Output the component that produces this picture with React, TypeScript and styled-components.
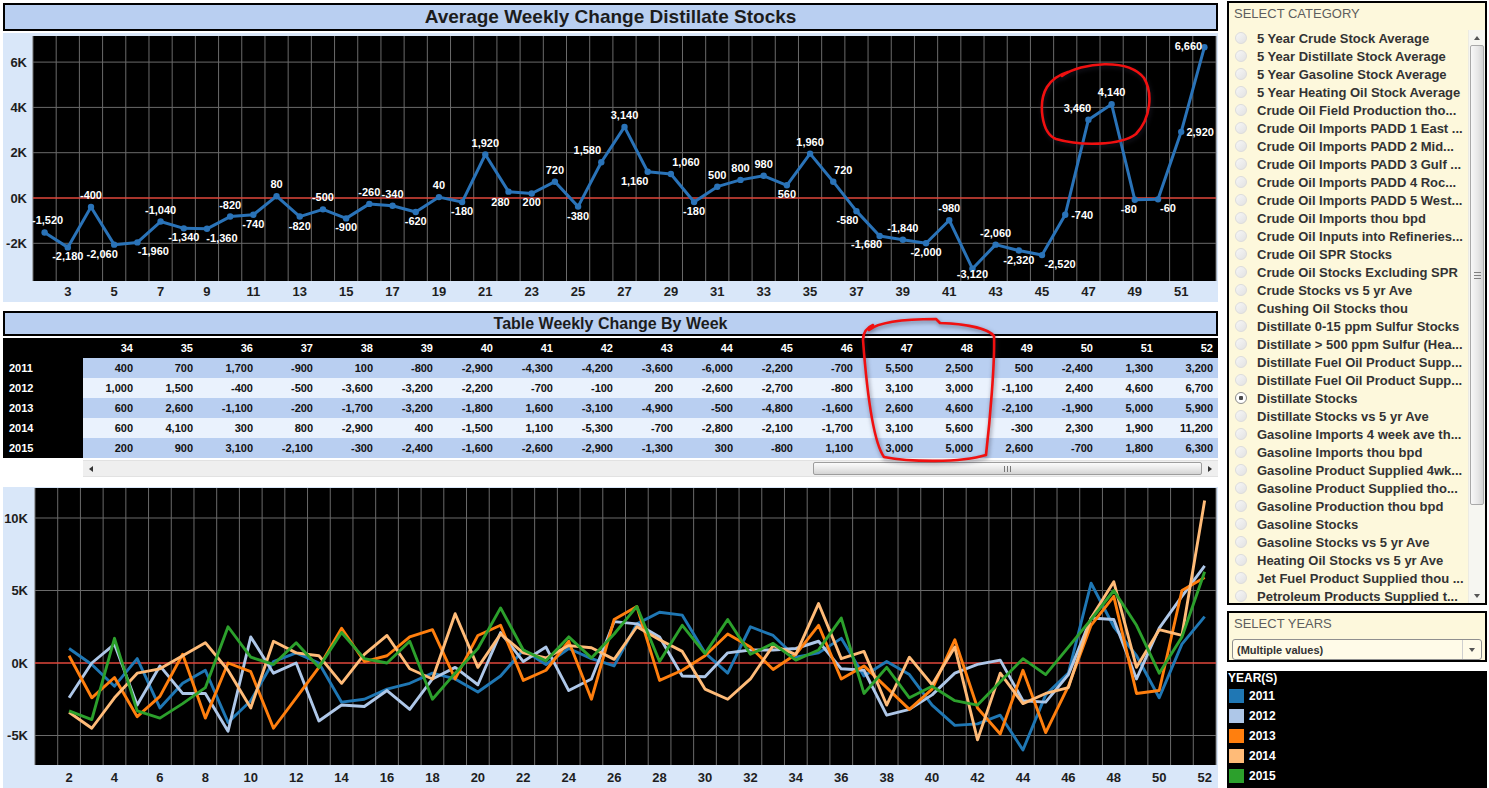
import React from 'react';
import styled, { createGlobalStyle } from 'styled-components';

const GlobalStyle = createGlobalStyle`
  html, body {
    margin: 0;
    padding: 0;
    background: #ffffff;
  }
  body {
    font-family: "Liberation Sans", Arial, sans-serif;
  }
`;

/* ---------- data ---------- */

// weekly change by year, weeks 2..52
const series: { year: string; color: string; values: number[] }[] = [
  {
    year: '2011',
    color: '#1f77b4',
    values: [1000, -100, -1600, 300, -3100, -1400, -500, -4100, -2600, 100, 700, 0, -2700, -2500, -1800, -1400, -700, -1100, -2000, -900, 900, -100, 1000, 300, -200, 2700, 3500, 3300, 700, -700, 2500, 1900,
      400, 700, 1700, -900, 100, -800, -2900, -4300, -4200, -3600, -6000, -2200, -700, 5500, 2500, 500, -2400, 1300, 3200],
  },
  {
    year: '2012',
    color: '#aec7e8',
    values: [-2400, 0, 1300, -2900, -200, -2100, -2100, -4700, 1800, -700, 0, -4000, -2900, -3000, -1900, -3200, -1100, -300, -1500, 2100, 100, 1100, -1900, -1100, 2850, 2700, 1800, -900, -950, 700, 900, 900,
      1000, 1500, -400, -500, -3600, -3200, -2200, -700, -100, 200, -2600, -2700, -800, 3100, 3000, -1100, 2400, 4600, 6700],
  },
  {
    year: '2013',
    color: '#ff7f0e',
    values: [500, -2400, -1000, -3700, -2300, 600, -3800, 0, -600, -4500, -2400, -300, 2400, 100, 500, 1800, 2300, -1100, 1900, 2600, -1200, -500, 1500, -2500, 3000, 3900, -1200, -500, 500, 2000, 1100, -450,
      600, 2600, -1100, -200, -1700, -3200, -1800, 1600, -3100, -4900, -500, -4800, -1600, 2600, 4600, -2100, -1900, 5000, 5900],
  },
  {
    year: '2014',
    color: '#ffbb78',
    values: [-3400, -4500, -2400, -700, -400, 500, 1400, -500, -3100, 1500, 700, 500, -1400, 600, 1900, -400, -1100, 3400, -300, 2000, 700, 350, 1200, 1050, 250, 2500, 1600, 800, -1800, -2500, -1100, 1200,
      600, 4100, 300, 800, -2900, 400, -1500, 1100, -5300, -700, -2800, -2100, -1700, 3100, 5600, -300, 2300, 1900, 11200],
  },
  {
    year: '2015',
    color: '#2ca02c',
    values: [-3300, -3900, 1700, -3300, -3800, -2800, -1700, 2500, 400, -100, 1400, -300, 2100, 300, 0, 1500, -2500, -700, 1000, 3800, 900, 150, 1800, 350, 2000, 3900, 100, 2600, 650, 3000, 600, 1350,
      200, 900, 3100, -2100, -300, -2400, -1600, -2600, -2900, -1300, 300, -800, 1100, 3000, 5000, 2600, -700, 1800, 6300],
  },
];

// five-year average, weeks 2..52, with label offsets [dx, dy]
const average = [-1520, -2180, -400, -2060, -1960, -1040, -1340, -1360, -820, -740, 80, -820, -500, -900, -260, -340, -620, 40, -180, 1920, 280, 200, 720, -380, 1580, 3140, 1160, 1060, -180, 500, 800, 980, 560, 1960, 720, -580, -1680, -1840, -2000, -980, -3120, -2060, -2320, -2520, -740, 3460, 4140, -80, -60, 2920, 6660];
const labelOffsets: [number, number][] = [
  [3, -12], [0, 9], [0, -12], [-12, 9], [16, 9], [0, -12], [0, 9], [15, 9], [0, -12], [0, 9],
  [0, -12], [0, 9], [0, -12], [0, 9], [0, -12], [0, -12], [0, 9], [0, -12], [0, 9], [0, -12],
  [-8, 10], [0, 9], [0, -12], [0, 9], [-14, -12], [0, -12], [-13, 9], [15, -12], [0, 9], [0, -12],
  [0, -12], [0, -12], [0, 9], [0, -12], [10, -12], [-9, 9], [-13, 8], [0, -12], [0, 9], [0, -12],
  [0, 5], [0, -12], [0, 9], [18, 9], [17, 0], [-11, -12], [0, -12], [-6, 9], [10, 9], [19, 0],
  [-16, -1],
];

const tableWeeks = Array.from({ length: 19 }, (_, i) => 34 + i);

const categories = [
  '5 Year Crude Stock Average',
  '5 Year Distillate Stock Average',
  '5 Year Gasoline Stock Average',
  '5 Year Heating Oil Stock Average',
  'Crude Oil Field Production tho...',
  'Crude Oil Imports PADD 1 East ...',
  'Crude Oil Imports PADD 2 Mid...',
  'Crude Oil Imports PADD 3 Gulf ...',
  'Crude Oil Imports PADD 4 Roc...',
  'Crude Oil Imports PADD 5 West...',
  'Crude Oil Imports thou bpd',
  'Crude Oil Inputs into Refineries...',
  'Crude Oil SPR Stocks',
  'Crude Oil Stocks Excluding SPR',
  'Crude Stocks vs 5 yr Ave',
  'Cushing Oil Stocks thou',
  'Distillate 0-15 ppm Sulfur Stocks',
  'Distillate > 500 ppm Sulfur (Hea...',
  'Distillate Fuel Oil Product Supp...',
  'Distillate Fuel Oil Product Supp...',
  'Distillate Stocks',
  'Distillate Stocks vs 5 yr Ave',
  'Gasoline Imports 4 week ave th...',
  'Gasoline Imports thou bpd',
  'Gasoline Product Supplied 4wk...',
  'Gasoline Product Supplied tho...',
  'Gasoline Production thou bpd',
  'Gasoline Stocks',
  'Gasoline Stocks vs 5 yr Ave',
  'Heating Oil Stocks vs 5 yr Ave',
  'Jet Fuel Product Supplied thou ...',
  'Petroleum Products Supplied t...',
];
const SELECTED = 'Distillate Stocks';

const fmt = (v: number) => v.toLocaleString('en-US');

/* ---------- layout ---------- */

const Page = styled.div`
  position: relative;
  display: flex;
  width: 1489px;
  height: 788px;
  overflow: hidden;
  background: #fff;
`;

const Main = styled.div`
  width: 1215px;
  margin-left: 3px;
  padding-top: 3px;
  display: flex;
  flex-direction: column;
`;

const TitleBar = styled.div<{ $h: number; $size: number; $mt?: number }>`
  box-sizing: border-box;
  height: ${({ $h }) => $h}px;
  margin-top: ${({ $mt = 0 }) => $mt}px;
  border: 2px solid #000;
  background: #b9cff1;
  display: flex;
  align-items: center;
  justify-content: center;
  font-weight: bold;
  font-size: ${({ $size }) => $size}px;
  color: #1c1c1c;
`;

const ChartPanel = styled.div<{ $h: number; $mt: number }>`
  height: ${({ $h }) => $h}px;
  margin-top: ${({ $mt }) => $mt}px;
  background: #d9e7f9;

  svg {
    display: block;
  }
`;

const AxisText = styled.text`
  font-family: "Liberation Sans", Arial, sans-serif;
  font-weight: bold;
  font-size: 13px;
  fill: #1e1e1e;
`;

const PointLabel = styled.text`
  font-family: "Liberation Sans", Arial, sans-serif;
  font-weight: bold;
  font-size: 11px;
  fill: #ffffff;
`;

/* ---------- table ---------- */

const TableFrame = styled.div`
  margin-top: 2px;
  width: 1215px;
  overflow: hidden;
`;

const Grid = styled.div`
  display: grid;
  grid-template-columns: 80px repeat(19, 60px);
  grid-auto-rows: 20px;
  width: 1220px;
  font-size: 11px;
  font-weight: bold;
`;

const HeadCell = styled.div`
  background: #000;
  color: #fff;
  display: flex;
  align-items: center;
  justify-content: flex-end;
  padding-right: 10px;
`;

const LabelCell = styled.div`
  background: #000;
  color: #fff;
  display: flex;
  align-items: center;
  padding-left: 6px;
`;

const DataCell = styled.div<{ $alt: boolean }>`
  background: ${({ $alt }) => ($alt ? '#eaf2fd' : '#b9cff1')};
  color: #111;
  display: flex;
  align-items: center;
  justify-content: flex-end;
  padding-right: 10px;
`;

const ScrollRow = styled.div`
  margin-top: 2px;
  height: 17px;
  display: flex;
`;

const ScrollSpacer = styled.div`
  width: 80px;
`;

const HTrack = styled.div`
  flex: 1;
  display: flex;
  align-items: stretch;
  background: #efefef;
  border-top: 1px solid #e2e2e2;
  border-bottom: 1px solid #e2e2e2;
`;

const ArrowBox = styled.div`
  width: 16px;
  display: flex;
  align-items: center;
  justify-content: center;
`;

const Tri = styled.span<{ $dir: 'left' | 'right' | 'up' | 'down' }>`
  width: 0;
  height: 0;
  border: 3px solid transparent;
  ${({ $dir }) =>
    $dir === 'left'
      ? 'border-right: 4px solid #333; border-left-width: 0;'
      : $dir === 'right'
      ? 'border-left: 4px solid #333; border-right-width: 0;'
      : $dir === 'up'
      ? 'border-bottom: 4px solid #555; border-top-width: 0;'
      : 'border-top: 4px solid #555; border-bottom-width: 0;'}
`;

const Fill = styled.div`
  flex: 1;
`;

const HThumb = styled.div`
  width: 387px;
  margin: 1px 0;
  border: 1px solid #9d9d9d;
  border-radius: 2px;
  background: linear-gradient(to bottom, #fbfbfb 0%, #e9e9e9 50%, #d4d4d4 100%);
  display: flex;
  align-items: center;
  justify-content: center;
`;

const HGrip = styled.span`
  width: 7px;
  height: 6px;
  background: repeating-linear-gradient(to right, #777 0 1px, transparent 1px 3px);
`;

/* ---------- sidebar ---------- */

const Sidebar = styled.div`
  width: 260px;
  margin-left: 9px;
  padding-top: 1px;
  display: flex;
  flex-direction: column;
`;

const CreamBox = styled.div<{ $h: number; $mt?: number }>`
  box-sizing: border-box;
  height: ${({ $h }) => $h}px;
  margin-top: ${({ $mt = 0 }) => $mt}px;
  border: 2px solid #000;
  background: #fdf8dc;
  display: flex;
  flex-direction: column;
`;

const BoxTitle = styled.div<{ $pb: number }>`
  padding: 3px 0 ${({ $pb }) => $pb}px 5px;
  line-height: 16px;
  font-size: 13px;
  color: #5e5e5e;
`;

const ListArea = styled.div`
  flex: 1;
  min-height: 0;
  display: flex;
`;

const ItemList = styled.div`
  flex: 1;
  overflow: hidden;
`;

const Item = styled.div`
  height: 18px;
  display: flex;
  align-items: center;
  gap: 10px;
  padding-left: 6px;
  white-space: nowrap;
  font-size: 13px;
  font-weight: bold;
  color: #333333;
`;

const Radio = styled.span<{ $on: boolean }>`
  flex: none;
  box-sizing: border-box;
  width: 12px;
  height: 12px;
  border-radius: 50%;
  border: 1px solid ${({ $on }) => ($on ? '#8a8a8a' : '#dcdcdc')};
  background: ${({ $on }) =>
    $on
      ? 'radial-gradient(circle, #4a4a4a 0 2px, #ffffff 2.5px)'
      : 'linear-gradient(135deg, #f7f7f7, #e2e2e2)'};
`;

const VScroll = styled.div`
  width: 16px;
  margin-top: 1px;
  display: flex;
  flex-direction: column;
  background: #f6f6f1;
  border-left: 1px solid #ecebe2;
`;

const VArrow = styled.div`
  height: 15px;
  display: flex;
  align-items: center;
  justify-content: center;
`;

const VThumb = styled.div`
  height: 458px;
  margin: 0 1px;
  border: 1px solid #a9a9a9;
  border-radius: 2px;
  background: linear-gradient(to right, #f8f8f8 0%, #e6e6e6 60%, #d3d3d3 100%);
  display: flex;
  align-items: center;
  justify-content: center;
`;

const VGrip = styled.span`
  width: 7px;
  height: 7px;
  background: repeating-linear-gradient(to bottom, #808080 0 1px, transparent 1px 3px);
`;

const Dropdown = styled.div`
  box-sizing: border-box;
  height: 21px;
  margin: 7px 3px 0 3px;
  border: 1px solid #8f8f8f;
  border-radius: 3px;
  background: #fffbe8;
  display: flex;
  align-items: stretch;
  font-size: 11px;
  font-weight: bold;
  color: #333;
`;

const DropText = styled.div`
  flex: 1;
  display: flex;
  align-items: center;
  padding-left: 4px;
`;

const DropButton = styled.div`
  width: 18px;
  border-left: 1px solid #cfcfcf;
  display: flex;
  align-items: center;
  justify-content: center;
`;

const Legend = styled.div`
  flex: 1;
  margin-top: 9px;
  background: #000;
  padding-left: 1px;
  color: #fff;
  font-size: 12px;
  font-weight: bold;
`;

const LegendTitle = styled.div`
  line-height: 15px;
`;

const LegendItem = styled.div`
  height: 20px;
  display: flex;
  align-items: center;
  gap: 5px;
  padding-left: 1px;
`;

const Swatch = styled.span<{ $c: string }>`
  width: 15px;
  height: 14px;
  background: ${({ $c }) => $c};
`;

const Annotations = styled.svg`
  position: absolute;
  left: 0;
  top: 0;
  pointer-events: none;
  overflow: visible;

  path {
    fill: none;
    stroke: #f01010;
    stroke-width: 2.6;
    stroke-linecap: round;
    stroke-linejoin: round;
    filter: drop-shadow(1px 2px 2px rgba(40, 40, 60, 0.55));
  }
`;

/* ---------- charts ---------- */

function AverageChart() {
  const W = 1215;
  const H = 269;
  const x0 = 30;
  const x1 = 1213;
  const y0 = 3;
  const y1 = 248;
  const band = (x1 - x0) / 51;
  const X = (w: number) => x0 + (w - 1.5) * band;
  const Y = (v: number) => 165 - v * 0.02265;
  const pts = average.map((v, i) => [X(i + 2), Y(v)] as const);

  return (
    <svg width={W} height={H}>
      <rect x={x0} y={y0} width={x1 - x0} height={y1 - y0} fill="#000" />
      {Array.from({ length: 52 }, (_, i) => (
        <line key={i} x1={x0 + i * band} x2={x0 + i * band} y1={y0} y2={y1} stroke="#6a6a6a" strokeWidth={1} />
      ))}
      {[6000, 4000, 2000, -2000].map((v) => (
        <line key={v} x1={x0} x2={x1} y1={Y(v)} y2={Y(v)} stroke="#6a6a6a" strokeWidth={1} />
      ))}
      <line x1={x0} x2={x1} y1={Y(0)} y2={Y(0)} stroke="#e0473b" strokeWidth={1.6} />
      <polyline
        points={pts.map((p) => p.join(',')).join(' ')}
        fill="none"
        stroke="#2a73b8"
        strokeWidth={3}
        strokeLinejoin="round"
      />
      {pts.map(([x, y], i) => (
        <circle key={i} cx={x} cy={y} r={3.2} fill="#2a73b8" />
      ))}
      {pts.map(([x, y], i) => (
        <PointLabel key={i} x={x + labelOffsets[i][0]} y={y + labelOffsets[i][1] + 4} textAnchor="middle">
          {fmt(average[i])}
        </PointLabel>
      ))}
      {[6000, 4000, 2000, 0, -2000].map((v) => (
        <AxisText key={v} x={24} y={Y(v) + 4.5} textAnchor="end">
          {`${v / 1000}K`}
        </AxisText>
      ))}
      {Array.from({ length: 25 }, (_, i) => 3 + i * 2).map((w) => (
        <AxisText key={w} x={X(w)} y={263} textAnchor="middle">
          {w}
        </AxisText>
      ))}
    </svg>
  );
}

function YearsChart() {
  const W = 1215;
  const H = 301;
  const x0 = 32;
  const x1 = 1213;
  const y0 = 1;
  const y1 = 278;
  const band = (x1 - x0) / 52;
  const X = (w: number) => x0 + (w - 0.5) * band;
  const Y = (v: number) => 176 - v * 0.0145;

  return (
    <svg width={W} height={H}>
      <rect x={x0} y={y0} width={x1 - x0} height={y1 - y0} fill="#000" />
      {Array.from({ length: 53 }, (_, i) => (
        <line key={i} x1={x0 + i * band} x2={x0 + i * band} y1={y0} y2={y1} stroke="#6a6a6a" strokeWidth={1} />
      ))}
      {[10000, 5000, -5000].map((v) => (
        <line key={v} x1={x0} x2={x1} y1={Y(v)} y2={Y(v)} stroke="#6a6a6a" strokeWidth={1} />
      ))}
      <line x1={x0} x2={x1} y1={Y(0)} y2={Y(0)} stroke="#e0473b" strokeWidth={1.6} />
      {series.map((s) => (
        <polyline
          key={s.year}
          points={s.values.map((v, i) => `${X(i + 2)},${Y(v)}`).join(' ')}
          fill="none"
          stroke={s.color}
          strokeWidth={2.9}
          strokeLinejoin="round"
        />
      ))}
      {[10000, 5000, 0, -5000].map((v) => (
        <AxisText key={v} x={25} y={Y(v) + 4.5} textAnchor="end">
          {`${v / 1000}K`}
        </AxisText>
      ))}
      {Array.from({ length: 26 }, (_, i) => 2 + i * 2).map((w) => (
        <AxisText key={w} x={X(w)} y={295} textAnchor="middle">
          {w}
        </AxisText>
      ))}
    </svg>
  );
}

function WeeklyTable() {
  return (
    <TableFrame>
      <Grid>
        <HeadCell />
        {tableWeeks.map((w) => (
          <HeadCell key={w}>{w}</HeadCell>
        ))}
        {series.map((s, r) => (
          <React.Fragment key={s.year}>
            <LabelCell>{s.year}</LabelCell>
            {s.values.slice(32).map((v, c) => (
              <DataCell key={c} $alt={r % 2 === 1}>
                {fmt(v)}
              </DataCell>
            ))}
          </React.Fragment>
        ))}
      </Grid>
    </TableFrame>
  );
}

export default function App() {
  return (
    <>
      <GlobalStyle />
      <Page>
        <Main>
          <TitleBar $h={28} $size={19}>
            Average Weekly Change Distillate Stocks
          </TitleBar>
          <ChartPanel $h={269} $mt={2}>
            <AverageChart />
          </ChartPanel>
          <TitleBar $h={25} $size={16} $mt={9}>
            Table Weekly Change By Week
          </TitleBar>
          <WeeklyTable />
          <ScrollRow>
            <ScrollSpacer />
            <HTrack>
              <ArrowBox>
                <Tri $dir="left" />
              </ArrowBox>
              <Fill />
              <HThumb>
                <HGrip />
              </HThumb>
              <ArrowBox>
                <Tri $dir="right" />
              </ArrowBox>
            </HTrack>
          </ScrollRow>
          <ChartPanel $h={301} $mt={10}>
            <YearsChart />
          </ChartPanel>
        </Main>

        <Sidebar>
          <CreamBox $h={604}>
            <BoxTitle $pb={7}>SELECT CATEGORY</BoxTitle>
            <ListArea>
              <ItemList>
                {categories.map((c, i) => (
                  <Item key={i}>
                    <Radio $on={c === SELECTED} />
                    {c}
                  </Item>
                ))}
              </ItemList>
              <VScroll>
                <VArrow>
                  <Tri $dir="up" />
                </VArrow>
                <VThumb>
                  <VGrip />
                </VThumb>
                <Fill />
                <VArrow>
                  <Tri $dir="down" />
                </VArrow>
              </VScroll>
            </ListArea>
          </CreamBox>
          <CreamBox $h={51} $mt={6}>
            <BoxTitle $pb={0}>SELECT YEARS</BoxTitle>
            <Dropdown>
              <DropText>(Multiple values)</DropText>
              <DropButton>
                <Tri $dir="down" />
              </DropButton>
            </Dropdown>
          </CreamBox>
          <Legend>
            <LegendTitle>YEAR(S)</LegendTitle>
            {series.map((s) => (
              <LegendItem key={s.year}>
                <Swatch $c={s.color} />
                {s.year}
              </LegendItem>
            ))}
          </Legend>
        </Sidebar>

        <Annotations width={1489} height={788}>
          <path d="M 1062 76 C 1082 62, 1128 58, 1144 78 C 1153 93, 1151 118, 1136 134 C 1120 146, 1080 146, 1056 139 C 1041 133, 1038 102, 1047 87 C 1052 79, 1058 75, 1068 72" />
          <path d="M 869 330 C 880 321, 910 319, 936 319 L 940 323 C 965 324, 988 328, 994 336 C 995 362, 990 420, 986 455 C 960 463, 910 462, 884 457 C 872 440, 866 380, 863 340 C 863 333, 866 328, 873 325" />
        </Annotations>
      </Page>
    </>
  );
}
